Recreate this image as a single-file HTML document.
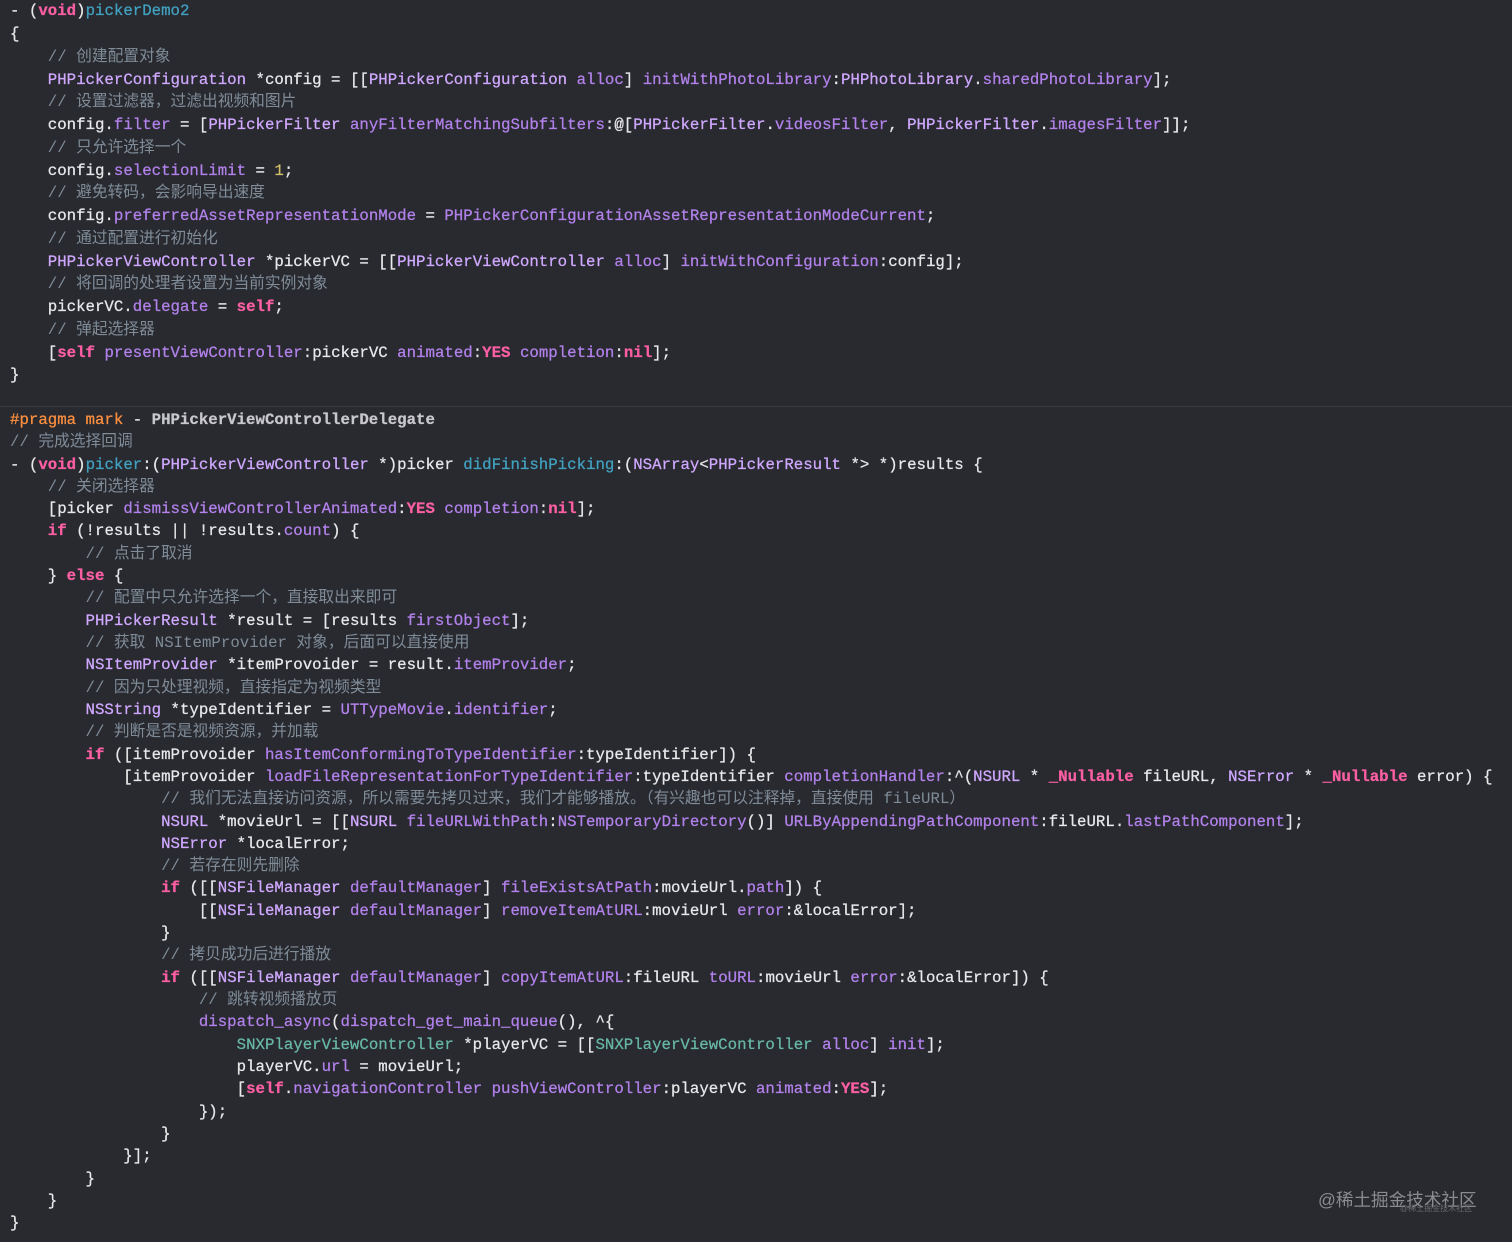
<!DOCTYPE html>
<html><head><meta charset="utf-8"><style>
html,body{margin:0;padding:0;background:#292a30;width:1512px;height:1242px;overflow:hidden;position:relative}
pre{position:absolute;left:10px;margin:0;font-family:"Liberation Mono","Noto Sans CJK SC",monospace;font-size:15.74px;color:#e8e8ea;-webkit-text-stroke:0.25px currentColor}
#b1{top:0.3px;line-height:22.75px}
#b2{top:408.9px;line-height:22.31px}
.k{color:#fc5fa3;font-weight:bold}
.m{color:#b281eb}
.c{color:#d0a8ff}
.d{color:#41a1c0}
.g{color:#67b7a4}
.cm{color:#7f8c98;-webkit-text-stroke:0}
.n{color:#d0bf69}
.pp{color:#fd8f3f}
.sep{position:absolute;left:0;right:0;top:406px;height:1px;background:#3a3b41}
.wm{position:absolute;left:1318px;top:1187px;font-family:"Liberation Sans","Noto Sans CJK SC",sans-serif;font-size:17.6px;color:#8a8b90}
.wm2{position:absolute;left:1400px;top:1203px;font-family:"Liberation Sans","Noto Sans CJK SC",sans-serif;font-size:8px;color:#6a6b70}
</style></head><body>
<div class="sep"></div>
<pre id="b1">- (<span class="k">void</span>)<span class="d">pickerDemo2</span>
{
    <span class="cm">// 创建配置对象</span>
    <span class="c">PHPickerConfiguration</span> *config = [[<span class="c">PHPickerConfiguration</span> <span class="m">alloc</span>] <span class="m">initWithPhotoLibrary</span>:<span class="c">PHPhotoLibrary</span>.<span class="m">sharedPhotoLibrary</span>];
    <span class="cm">// 设置过滤器，过滤出视频和图片</span>
    config.<span class="m">filter</span> = [<span class="c">PHPickerFilter</span> <span class="m">anyFilterMatchingSubfilters</span>:@[<span class="c">PHPickerFilter</span>.<span class="m">videosFilter</span>, <span class="c">PHPickerFilter</span>.<span class="m">imagesFilter</span>]];
    <span class="cm">// 只允许选择一个</span>
    config.<span class="m">selectionLimit</span> = <span class="n">1</span>;
    <span class="cm">// 避免转码，会影响导出速度</span>
    config.<span class="m">preferredAssetRepresentationMode</span> = <span class="m">PHPickerConfigurationAssetRepresentationModeCurrent</span>;
    <span class="cm">// 通过配置进行初始化</span>
    <span class="c">PHPickerViewController</span> *pickerVC = [[<span class="c">PHPickerViewController</span> <span class="m">alloc</span>] <span class="m">initWithConfiguration</span>:config];
    <span class="cm">// 将回调的处理者设置为当前实例对象</span>
    pickerVC.<span class="m">delegate</span> = <span class="k">self</span>;
    <span class="cm">// 弹起选择器</span>
    [<span class="k">self</span> <span class="m">presentViewController</span>:pickerVC <span class="m">animated</span>:<span class="k">YES</span> <span class="m">completion</span>:<span class="k">nil</span>];
}
</pre>
<pre id="b2"><span class="pp">#pragma mark</span> - <b style="color:#c8c8cc">PHPickerViewControllerDelegate</b>
<span class="cm">// 完成选择回调</span>
- (<span class="k">void</span>)<span class="d">picker</span>:(<span class="c">PHPickerViewController</span> *)picker <span class="d">didFinishPicking</span>:(<span class="c">NSArray</span>&lt;<span class="c">PHPickerResult</span> *&gt; *)results {
    <span class="cm">// 关闭选择器</span>
    [picker <span class="m">dismissViewControllerAnimated</span>:<span class="k">YES</span> <span class="m">completion</span>:<span class="k">nil</span>];
    <span class="k">if</span> (!results || !results.<span class="m">count</span>) {
        <span class="cm">// 点击了取消</span>
    } <span class="k">else</span> {
        <span class="cm">// 配置中只允许选择一个，直接取出来即可</span>
        <span class="c">PHPickerResult</span> *result = [results <span class="m">firstObject</span>];
        <span class="cm">// 获取 NSItemProvider 对象，后面可以直接使用</span>
        <span class="c">NSItemProvider</span> *itemProvoider = result.<span class="m">itemProvider</span>;
        <span class="cm">// 因为只处理视频，直接指定为视频类型</span>
        <span class="c">NSString</span> *typeIdentifier = <span class="m">UTTypeMovie</span>.<span class="m">identifier</span>;
        <span class="cm">// 判断是否是视频资源，并加载</span>
        <span class="k">if</span> ([itemProvoider <span class="m">hasItemConformingToTypeIdentifier</span>:typeIdentifier]) {
            [itemProvoider <span class="m">loadFileRepresentationForTypeIdentifier</span>:typeIdentifier <span class="m">completionHandler</span>:^(<span class="c">NSURL</span> * <span class="k">_Nullable</span> fileURL, <span class="c">NSError</span> * <span class="k">_Nullable</span> error) {
                <span class="cm">// 我们无法直接访问资源，所以需要先拷贝过来，我们才能够播放。（有兴趣也可以注释掉，直接使用 fileURL）</span>
                <span class="c">NSURL</span> *movieUrl = [[<span class="c">NSURL</span> <span class="m">fileURLWithPath</span>:<span class="m">NSTemporaryDirectory</span>()] <span class="m">URLByAppendingPathComponent</span>:fileURL.<span class="m">lastPathComponent</span>];
                <span class="c">NSError</span> *localError;
                <span class="cm">// 若存在则先删除</span>
                <span class="k">if</span> ([[<span class="c">NSFileManager</span> <span class="m">defaultManager</span>] <span class="m">fileExistsAtPath</span>:movieUrl.<span class="m">path</span>]) {
                    [[<span class="c">NSFileManager</span> <span class="m">defaultManager</span>] <span class="m">removeItemAtURL</span>:movieUrl <span class="m">error</span>:&amp;localError];
                }
                <span class="cm">// 拷贝成功后进行播放</span>
                <span class="k">if</span> ([[<span class="c">NSFileManager</span> <span class="m">defaultManager</span>] <span class="m">copyItemAtURL</span>:fileURL <span class="m">toURL</span>:movieUrl <span class="m">error</span>:&amp;localError]) {
                    <span class="cm">// 跳转视频播放页</span>
                    <span class="m">dispatch_async</span>(<span class="m">dispatch_get_main_queue</span>(), ^{
                        <span class="g">SNXPlayerViewController</span> *playerVC = [[<span class="g">SNXPlayerViewController</span> <span class="m">alloc</span>] <span class="m">init</span>];
                        playerVC.<span class="m">url</span> = movieUrl;
                        [<span class="k">self</span>.<span class="m">navigationController</span> <span class="m">pushViewController</span>:playerVC <span class="m">animated</span>:<span class="k">YES</span>];
                    });
                }
            }];
        }
    }
}</pre>
<div class="wm">@稀土掘金技术社区</div>
<div class="wm2">@稀土掘金技术社区</div>
</body></html>
